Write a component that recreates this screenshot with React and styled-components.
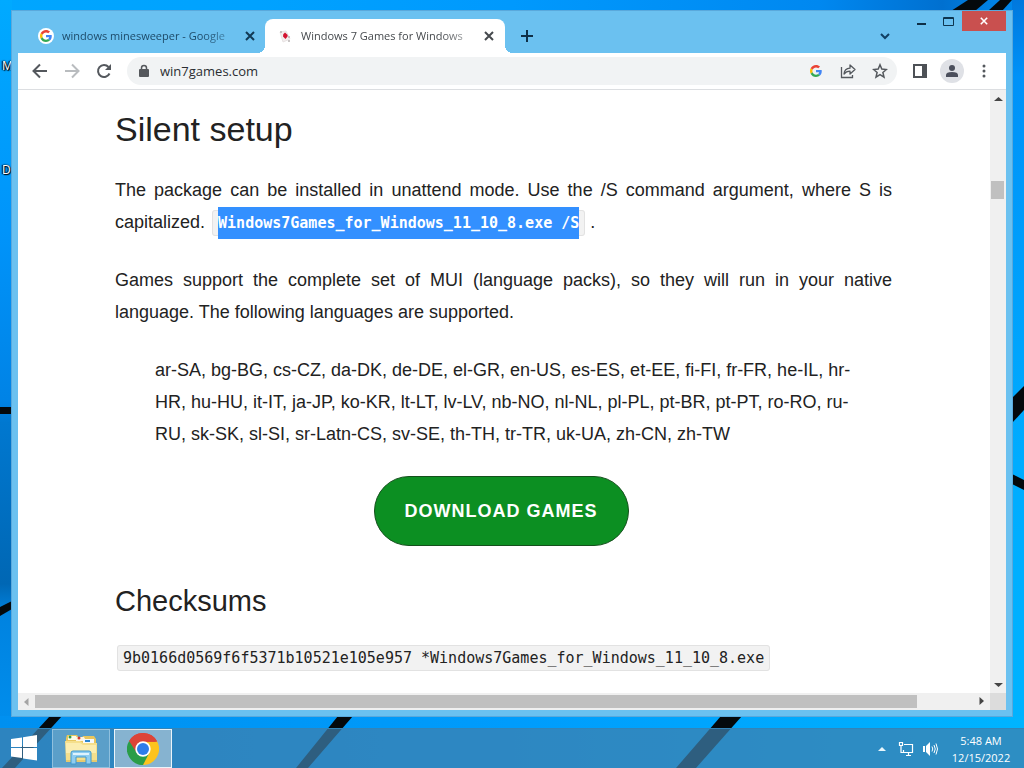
import React from "react";
import styled, { createGlobalStyle } from "styled-components";

const UI = '"Open Sans", "Noto Sans", sans-serif';
const BODY = '"Liberation Sans", Arial, sans-serif';
const MONO = '"DejaVu Sans Mono", "Liberation Mono", monospace';

const GlobalStyle = createGlobalStyle`
  *, *::before, *::after { box-sizing: border-box; }
  body { margin: 0; font-family: ${UI}; }
  svg { display: block; }
`;

const PlainButton = styled.button`
  border: 0;
  padding: 0;
  background: none;
  color: inherit;
  font-family: ${UI};
  cursor: pointer;
`;

const Desktop = styled.div`
  position: relative;
  height: 100vh;
  min-height: 480px;
  display: flex;
  flex-direction: column;
  overflow: hidden;
  background: #0098fb;
`;

const Wallpaper = styled.svg`
  position: absolute;
  inset: 0;
  width: 100%;
  height: 100%;
`;

const IconLabel = styled.span`
  position: absolute;
  left: 2px;
  top: ${(p) => p.$top}px;
  color: #fff;
  font-size: 12px;
  line-height: 16px;
  text-shadow: 0 0 2px #000, 1px 1px 1px #000, -1px 0 1px #000;
`;

const Workspace = styled.main`
  position: relative;
  flex: 1;
  min-height: 0;
  padding: 10px 11px 11px;
  display: flex;
`;

const Window = styled.section`
  flex: 1;
  min-width: 0;
  display: flex;
  flex-direction: column;
  padding: 0 7px 7px;
  background: #6bc1f0;
  box-shadow: inset 0 0 0 1px #5aa9dc;
`;

const TitleBar = styled.header`
  height: 43px;
  flex: none;
  display: flex;
  align-items: flex-end;
`;

const Tab = styled.div`
  position: relative;
  width: ${(p) => (p.$active ? 240 : 247)}px;
  height: 34px;
  padding: 0 ${(p) => (p.$active ? "10px 0 12px" : "9px 0 20px")};
  display: flex;
  align-items: center;
  gap: 8px;
  border-radius: 8px 8px 0 0;
  background: ${(p) => (p.$active ? "#fff" : "transparent")};
  color: ${(p) => (p.$active ? "#45494d" : "#1d4a68")};

  &::before, &::after {
    content: "";
    display: ${(p) => (p.$active ? "block" : "none")};
    position: absolute;
    bottom: 0;
    width: 8px;
    height: 8px;
  }
  &::before {
    right: 100%;
    background: radial-gradient(circle at 0 0, transparent 8px, #fff 8px);
  }
  &::after {
    left: 100%;
    background: radial-gradient(circle at 100% 0, transparent 8px, #fff 8px);
  }
`;

const TabTitle = styled(PlainButton)`
  flex: 1;
  min-width: 0;
  white-space: nowrap;
  text-align: left;
  font-size: 11px;
  line-height: 18px;
  mask-image: linear-gradient(to right, #000 80%, rgba(0, 0, 0, 0.3));
`;

const IconButton = styled(PlainButton)`
  flex: none;
  width: ${(p) => p.$size || 24}px;
  height: ${(p) => p.$size || 24}px;
  display: grid;
  place-items: center;
  border-radius: 50%;
  color: ${(p) => p.$color || "#54585d"};
  background: ${(p) => p.$fill || "none"};
`;

const NewTab = styled(IconButton)`
  margin: 0 0 5px 10px;
`;

const TabSearch = styled(IconButton)`
  margin: 0 0 5px auto;
`;

const WindowControls = styled.div`
  align-self: flex-start;
  display: flex;
  margin-left: 11px;
  padding-top: 1px;
`;

const WindowButton = styled(PlainButton)`
  width: ${(p) => (p.$close ? 44 : 27)}px;
  height: 20px;
  display: grid;
  place-items: center;
  background: ${(p) => (p.$close ? "#c9504f" : "none")};
`;

const Toolbar = styled.div`
  flex: none;
  height: 37px;
  display: flex;
  align-items: center;
  padding: 0 10px;
  background: #fff;
  border-bottom: 1px solid #dcdee1;
`;

const NavGroup = styled.div`
  display: flex;
  gap: 8px;
`;

const Omnibox = styled.div`
  flex: 1;
  height: 28px;
  margin: 0 11px;
  padding: 0 5px 0 10px;
  display: flex;
  align-items: center;
  gap: 8px;
  border-radius: 14px;
  background: #f1f3f4;
`;

const Address = styled.input`
  flex: 1;
  min-width: 0;
  border: 0;
  padding: 0 0 0 1px;
  outline: 0;
  background: none;
  color: #2b2e32;
  font-family: ${UI};
  font-size: 13px;
  line-height: 20px;
`;

const Viewport = styled.div`
  flex: 1;
  min-height: 0;
  display: grid;
  grid-template-columns: minmax(0, 1fr) 16px;
  grid-template-rows: minmax(0, 1fr) 17px;
  background: #fff;
`;

const Page = styled.article`
  overflow: hidden;
  padding: 19px 98px 0 97px;
  font-family: ${BODY};
  color: #222;
`;

const Title = styled.h2`
  margin: 0 0 25px;
  font-size: 34px;
  line-height: 40px;
  font-weight: 400;
`;

const Subtitle = styled.h3`
  margin: 37px 0 30px;
  font-size: 29px;
  line-height: 36px;
  font-weight: 400;
`;

const Paragraph = styled.p`
  margin: 0 0 26px;
  font-size: 18px;
  line-height: 32px;
  text-align: justify;
`;

const Languages = styled.blockquote`
  margin: 0 38px 26px 40px;
  font-size: 18px;
  line-height: 32px;
`;

const Code = styled.code`
  margin-left: 2px;
  padding: 3px 5px;
  border: 1px solid #e2e2e2;
  border-radius: 3px;
  background: #f2f2f2;
  font-family: ${MONO};
  font-size: 15px;
  line-height: 19px;
`;

const Selected = styled.mark`
  padding: 7px 0;
  background: #3390ff;
  color: #fff;
  font-weight: 700;
`;

const ButtonRow = styled.div`
  display: flex;
  justify-content: center;
  padding-right: 5px;
`;

const Download = styled.a`
  height: 70px;
  padding: 0 30px;
  display: flex;
  align-items: center;
  border: 1px solid #14501c;
  border-radius: 35px;
  background: #0c8f22;
  color: #fff;
  font-size: 18px;
  font-weight: 700;
  letter-spacing: 1px;
  text-decoration: none;
`;

const Scrollbar = styled.div`
  display: flex;
  flex-direction: ${(p) => (p.$vertical ? "column" : "row")};
  align-items: center;
  background: #f0f0f0;
`;

const ScrollArrow = styled(PlainButton)`
  width: 15px;
  height: 17px;
  flex: 0 0 17px;
  display: grid;
  place-items: center;
`;

const Track = styled.div`
  flex: 1;
  display: flex;
  flex-direction: ${(p) => (p.$vertical ? "column" : "row")};
  align-self: stretch;
  padding: ${(p) => (p.$vertical ? "0 2px 0 1px" : "2px 0")};
`;

const Spacer = styled.div`
  flex: ${(p) => p.$grow};
`;

const Thumb = styled.div`
  flex: ${(p) => p.$grow};
  background: #c0c0c0;
`;

const Corner = styled.div`
  background: #dcdcdc;
`;

const Taskbar = styled.footer`
  position: relative;
  flex: none;
  height: 40px;
  display: flex;
  align-items: stretch;
  background: rgba(62, 128, 172, 0.72);
  border-top: 1px solid #3384b8;
`;

const StartButton = styled(PlainButton)`
  width: 48px;
  display: grid;
  place-items: center;
`;

const TaskButton = styled(PlainButton)`
  width: 58px;
  margin-left: 4px;
  display: grid;
  place-items: center;
  border: 1px solid ${(p) => (p.$active ? "#eaf4fa" : "#8fc0de")};
  background: ${(p) => (p.$active ? "#86b3d0" : "#5b9fc9")};
`;

const Tray = styled.div`
  margin-left: auto;
  display: flex;
  align-items: center;
  padding-right: 10px;
`;

const TrayButton = styled(PlainButton)`
  width: 24px;
  height: 24px;
  display: grid;
  place-items: center;
`;

const Clock = styled.time`
  width: 66px;
  margin-left: 6px;
  text-align: center;
  color: #fff;
  font-size: 11px;
  line-height: 17px;
  white-space: nowrap;
`;

const GoogleG = ({ size = 12 }) => (
  <svg width={size} height={size} viewBox="0 0 48 48" aria-hidden="true">
    <path fill="#EA4335" d="M24 9.5c3.5 0 6.700 1.200 9.200 3.600l6.900-6.900C35.900 2.400 30.500 0 24 0 14.600 0 6.500 5.400 2.600 13.200l8 6.200C12.400 13.700 17.700 9.500 24 9.500z" />
    <path fill="#4285F4" d="M47 24.600c0-1.600-.2-3.100-.4-4.600H24v9h12.900c-.6 3-2.200 5.500-4.700 7.200l7.700 6C44.400 38 47 31.800 47 24.600z" />
    <path fill="#FBBC05" d="M10.500 28.600c-.5-1.500-.8-3-.8-4.600s.3-3.100.8-4.600l-8-6.200C.9 16.500 0 20.100 0 24s.9 7.500 2.600 10.800l7.900-6.200z" />
    <path fill="#34A853" d="M24 48c6.500 0 11.900-2.100 15.900-5.800l-7.700-6c-2.200 1.500-4.900 2.300-8.200 2.300-6.300 0-11.600-4.200-13.500-9.900l-8 6.200C6.500 42.600 14.600 48 24 48z" />
  </svg>
);

const GoogleFavicon = styled.span`
  width: 16px;
  height: 16px;
  flex: none;
  display: grid;
  place-items: center;
  border-radius: 50%;
  background: #fff;
`;

const FaviconSvg = styled.svg`
  flex: none;
`;

const CardsFavicon = () => (
  <FaviconSvg width="16" height="16" viewBox="0 0 16 16" aria-hidden="true">
    <path d="M3 4l6-1 4 8-7 3z" fill="#f3eeee" stroke="#e8e3e3" />
    <path d="M8 4.500q3 2 2.500 4L8.500 11 6 8.500q-.5-2.500 2-4z" fill="#d3122f" />
    <circle cx="4" cy="4" r="1" fill="#b9b3b3" />
    <circle cx="12" cy="9" r="1" fill="#b9b3b3" />
    <circle cx="12" cy="13" r="1" fill="#b9b3b3" />
  </FaviconSvg>
);

const Cross = ({ color, size = 10, width = 2 }) => (
  <svg width={size} height={size} viewBox="0 0 10 10" fill="none" stroke={color} strokeWidth={width}>
    <path d="M1 1l8 8M9 1L1 9" />
  </svg>
);

const Arrow = ({ flip }) => (
  <svg width="16" height="16" viewBox="0 0 16 16" fill="none" stroke="currentColor" strokeWidth="2">
    <path d={flip ? "M1 8h13M8 1.500L14.500 8 8 14.500" : "M15 8H2M8 1.500L1.500 8 8 14.500"} />
  </svg>
);

const Triangle = ({ d, color = "#454545" }) => (
  <svg width="9" height="9" viewBox="0 0 9 9" fill={color}>
    <path d={d} />
  </svg>
);

const FolderIcon = () => (
  <svg width="36" height="32" viewBox="0 0 36 32" aria-hidden="true">
    <path d="M3 5l1-3h10l2 3h3l1-2h11l2 3v22H3z" fill="#e8c65e" />
    <path d="M5 3h8l2 4H5z" fill="#fffbe8" />
    <path d="M13 4h8l2 4H13z" fill="#fff5e0" />
    <path d="M20 6h11v4H20z" fill="#f7fafc" />
    <circle cx="7" cy="4" r="1.500" fill="#2f9c4a" />
    <circle cx="16" cy="5" r="1.500" fill="#d5392b" />
    <path d="M22 7h5v2h-5z" fill="#2d86cf" />
    <path d="M2 8h15l3 2h14v19H3z" fill="#f5df8c" />
    <path d="M3 10h14l3 2h13v8H3z" fill="#fbedb0" />
    <path d="M3 28h31" stroke="#d7b451" />
    <path d="M8 31V20q0-2 2-2h16q2 0 2 2v11h-5v-7H13v7z" fill="#8fcdf0" stroke="#3e98cd" />
    <path d="M10 21h16" stroke="#dff3fd" strokeWidth="2" />
  </svg>
);

const ChromeIcon = () => (
  <svg width="32" height="32" viewBox="0 0 48 48" aria-hidden="true">
    <path d="M24 24L3.200 12A24 24 0 0 1 44.800 12z" fill="#dc4437" />
    <path d="M24 24L44.800 12A24 24 0 0 1 24 48z" fill="#fcc31e" />
    <path d="M24 24L24 48A24 24 0 0 1 3.200 12z" fill="#2a9d48" />
    <path d="M24 13h20.300q.8 1 1.500 3L46 20H30z" fill="#fcc31e" />
    <path d="M24 13h21.300A24 24 0 0 0 3.200 12l11.300 17.500z" fill="#dc4437" />
    <path d="M33.500 29.500L24 48q-4 0-7-1l8-14z" fill="#2a9d48" />
    <circle cx="24" cy="24" r="11.500" fill="#fff" />
    <circle cx="24" cy="24" r="9" fill="#2f7de9" />
  </svg>
);

export default function App() {
  return (
    <>
      <GlobalStyle />
      <Desktop>
        <Wallpaper viewBox="0 0 1024 768" preserveAspectRatio="none" aria-hidden="true">
          <defs>
            <linearGradient id="sky" x1="0" x2="1">
              <stop offset="0" stopColor="#00a6ff" />
              <stop offset="0.25" stopColor="#00a2ff" />
              <stop offset="0.5" stopColor="#0099fd" />
              <stop offset="0.8" stopColor="#0088f0" />
              <stop offset="0.92" stopColor="#0070d0" />
              <stop offset="1" stopColor="#008cf0" />
            </linearGradient>
            <linearGradient id="left" x1="0" x2="0" y1="0" y2="1">
              <stop offset="0" stopColor="#00aaff" />
              <stop offset="0.3" stopColor="#0094fa" />
              <stop offset="0.52" stopColor="#0083e6" />
              <stop offset="0.55" stopColor="#0078d0" />
              <stop offset="0.76" stopColor="#0067b4" />
              <stop offset="0.8" stopColor="#0083e0" />
              <stop offset="1" stopColor="#0092f2" />
            </linearGradient>
            <linearGradient id="right" x1="0" x2="0" y1="0" y2="1">
              <stop offset="0" stopColor="#0078dd" />
              <stop offset="0.1" stopColor="#0092f8" />
              <stop offset="0.6" stopColor="#00acff" />
              <stop offset="1" stopColor="#00b4ff" />
            </linearGradient>
            <linearGradient id="low" x1="0" x2="1">
              <stop offset="0" stopColor="#0090f0" />
              <stop offset="0.5" stopColor="#009cfc" />
              <stop offset="1" stopColor="#00b4ff" />
            </linearGradient>
          </defs>
          <rect width="1024" height="768" fill="url(#sky)" />
          <rect width="12" height="768" fill="url(#left)" />
          <rect x="1012" width="12" height="768" fill="url(#right)" />
          <rect y="716" width="1024" height="52" fill="url(#low)" />
          <g fill="#04090c">
            <path d="M0 407h12v7H0z" />
            <path d="M0 607L12 601V609L0 616z" />
            <path d="M968 0h20L975 11H951z" />
            <path d="M1000 0h12L1002 11H988z" />
            <path d="M1012 398L1024 386V410L1012 423z" />
            <path d="M1012 474L1024 480V490L1012 484z" />
            <path d="M50 716H62L15 768H2z" />
            <path d="M338 716H353L308 768H296z" />
            <path d="M721 716H742L696 768H676z" />
          </g>
        </Wallpaper>
        <IconLabel $top={58}>M</IconLabel>
        <IconLabel $top={162}>D</IconLabel>

        <Workspace>
          <Window aria-label="Browser">
            <TitleBar>
              <Tab>
                <GoogleFavicon><GoogleG /></GoogleFavicon>
                <TabTitle>windows minesweeper - Google</TabTitle>
                <IconButton $size={12} aria-label="Close tab"><Cross color="#123a55" /></IconButton>
              </Tab>
              <Tab $active>
                <CardsFavicon />
                <TabTitle>Windows 7 Games for Windows</TabTitle>
                <IconButton $size={12} aria-label="Close tab"><Cross color="#45494d" /></IconButton>
              </Tab>
              <NewTab aria-label="New tab">
                <svg width="12" height="12" viewBox="0 0 12 12" stroke="#0e2f47" strokeWidth="2"><path d="M6 0v12M0 6h12" /></svg>
              </NewTab>
              <TabSearch aria-label="Search tabs">
                <svg width="10" height="7" viewBox="0 0 10 7" fill="none" stroke="#114064" strokeWidth="2"><path d="M1 1l4 4 4-4" /></svg>
              </TabSearch>
              <WindowControls>
                <WindowButton aria-label="Minimize">
                  <svg width="9" height="9" viewBox="0 0 9 9" fill="#0e2f47"><path d="M0 6h9v2H0z" /></svg>
                </WindowButton>
                <WindowButton aria-label="Maximize">
                  <svg width="11" height="9" viewBox="0 0 11 9" fill="none" stroke="#0e3650"><path d="M.5.5h10v8H.5zM0 1.500h11" /></svg>
                </WindowButton>
                <WindowButton $close aria-label="Close"><Cross color="#fff" size={8} /></WindowButton>
              </WindowControls>
            </TitleBar>

            <Toolbar>
              <NavGroup>
                <IconButton aria-label="Back"><Arrow /></IconButton>
                <IconButton $color="#b9bcbf" aria-label="Forward"><Arrow flip /></IconButton>
                <IconButton aria-label="Reload">
                  <svg width="16" height="16" viewBox="0 0 16 16" fill="none" stroke="currentColor" strokeWidth="2">
                    <path d="M13.500 10.500A6 6 0 1 1 12.500 4" />
                    <path d="M15 1v6H9z" fill="currentColor" stroke="none" />
                  </svg>
                </IconButton>
              </NavGroup>
              <Omnibox>
                <svg width="14" height="14" viewBox="0 0 14 14" fill="#55585c" aria-hidden="true">
                  <path d="M3 5h8q1 0 1 1v6q0 1-1 1H3q-1 0-1-1V6q0-1 1-1z" />
                  <path d="M4.500 6V4a2.500 2.500 0 0 1 5 0v2" fill="none" stroke="#55585c" strokeWidth="1.500" />
                </svg>
                <Address aria-label="Address" defaultValue="win7games.com" />
                <IconButton aria-label="Google"><GoogleG /></IconButton>
                <IconButton aria-label="Share">
                  <svg width="16" height="16" viewBox="0 0 16 16" fill="none" stroke="currentColor" strokeWidth="1.300">
                    <path d="M1.500 4v10.500h11V12" />
                    <path d="M4 11C4.300 7.500 6.500 5.500 10 5.200V2L15 6.500 10 11V8.200C7.500 8.200 5.500 9 4 11z" strokeLinejoin="round" />
                  </svg>
                </IconButton>
                <IconButton aria-label="Bookmark">
                  <svg width="16" height="16" viewBox="0 0 16 16" fill="none" stroke="currentColor" strokeWidth="1.500">
                    <path d="M8 1.800l1.800 4.300 4.600.4-3.500 3 1.100 4.600L8 11.700l-4 2.400 1.100-4.600-3.500-3 4.600-.4z" />
                  </svg>
                </IconButton>
              </Omnibox>
              <NavGroup>
                <IconButton aria-label="Side panel">
                  <svg width="14" height="14" viewBox="0 0 14 14" fill="#4d5156"><path fillRule="evenodd" d="M0 0h14v14H0zM2 2v10h7V2z" /></svg>
                </IconButton>
                <IconButton $size={24} $fill="#dfe1e6" aria-label="Profile">
                  <svg width="12" height="12" viewBox="0 0 12 12" fill="#4b4f5c"><circle cx="6" cy="3" r="3" /><path d="M0 12v-2q0-3 6-3t6 3v2z" /></svg>
                </IconButton>
                <IconButton aria-label="Menu">
                  <svg width="4" height="14" viewBox="0 0 4 14" fill="currentColor"><circle cx="2" cy="2" r="1.500" /><circle cx="2" cy="7" r="1.500" /><circle cx="2" cy="12" r="1.500" /></svg>
                </IconButton>
              </NavGroup>
            </Toolbar>

            <Viewport>
              <Page>
                <Title>Silent setup</Title>
                <Paragraph>
                  The package can be installed in unattend mode. Use the /S command argument, where S is
                  capitalized. <Code><Selected>Windows7Games_for_Windows_11_10_8.exe /S</Selected></Code> .
                </Paragraph>
                <Paragraph>
                  Games support the complete set of MUI (language packs), so they will run in your native
                  language. The following languages are supported.
                </Paragraph>
                <Languages>
                  ar-SA, bg-BG, cs-CZ, da-DK, de-DE, el-GR, en-US, es-ES, et-EE, fi-FI, fr-FR, he-IL, hr-HR,
                  hu-HU, it-IT, ja-JP, ko-KR, lt-LT, lv-LV, nb-NO, nl-NL, pl-PL, pt-BR, pt-PT, ro-RO, ru-RU,
                  sk-SK, sl-SI, sr-Latn-CS, sv-SE, th-TH, tr-TR, uk-UA, zh-CN, zh-TW
                </Languages>
                <ButtonRow>
                  <Download href="#download">DOWNLOAD GAMES</Download>
                </ButtonRow>
                <Subtitle>Checksums</Subtitle>
                <Code>9b0166d0569f6f5371b10521e105e957 *Windows7Games_for_Windows_11_10_8.exe</Code>
              </Page>
              <Scrollbar $vertical>
                <ScrollArrow aria-label="Scroll up"><Triangle d="M0 7l4.500-4L9 7z" /></ScrollArrow>
                <Track $vertical>
                  <Spacer $grow={74} />
                  <Thumb $grow={18} />
                  <Spacer $grow={477} />
                </Track>
                <ScrollArrow aria-label="Scroll down"><Triangle d="M0 3l4.500 4L9 3z" /></ScrollArrow>
              </Scrollbar>
              <Scrollbar>
                <ScrollArrow aria-label="Scroll left"><Triangle d="M6.500 1v8L2 5z" color="#a5a5a5" /></ScrollArrow>
                <Track>
                  <Thumb $grow={882} />
                  <Spacer $grow={56} />
                </Track>
                <ScrollArrow aria-label="Scroll right"><Triangle d="M2.500 0v8L7 4z" /></ScrollArrow>
              </Scrollbar>
              <Corner />
            </Viewport>
          </Window>
        </Workspace>

        <Taskbar>
          <StartButton aria-label="Start">
            <svg width="28" height="28" viewBox="0 0 28 28" fill="#fff">
              <path d="M1 4l11-1.500V12H1zM13 2.300L27 0v12H13zM1 13h11v10L1 21.500zM13 13h14v12.500L13 23.400z" />
            </svg>
          </StartButton>
          <TaskButton aria-label="File Explorer"><FolderIcon /></TaskButton>
          <TaskButton $active aria-label="Google Chrome"><ChromeIcon /></TaskButton>
          <Tray>
            <TrayButton aria-label="Show hidden icons">
              <svg width="8" height="5" viewBox="0 0 8 5" fill="#e8f6fc"><path d="M0 5l4-4 4 4z" /></svg>
            </TrayButton>
            <TrayButton aria-label="Network">
              <svg width="16" height="16" viewBox="0 0 16 16" fill="none" stroke="#fff">
                <path d="M6 3.500h8.500v8H5.500V9M8 14.500h5M10.500 12v2.500" strokeWidth="1.200" />
                <path d="M1.500 1.500h3v3h-3zM3 5v6.500h2" strokeWidth="1.200" />
              </svg>
            </TrayButton>
            <TrayButton aria-label="Volume">
              <svg width="16" height="16" viewBox="0 0 16 16" fill="#fff">
                <path d="M1 5h2v6H1zM4 5l4-4v14l-4-4z" />
                <path d="M10 5.500q1.500 2.500 0 5M12 4q2.500 4 0 8M14 2.500q3 5.500 0 11" fill="none" stroke="#fff" />
              </svg>
            </TrayButton>
            <Clock>5:48 AM<br />12/15/2022</Clock>
          </Tray>
        </Taskbar>
      </Desktop>
    </>
  );
}
